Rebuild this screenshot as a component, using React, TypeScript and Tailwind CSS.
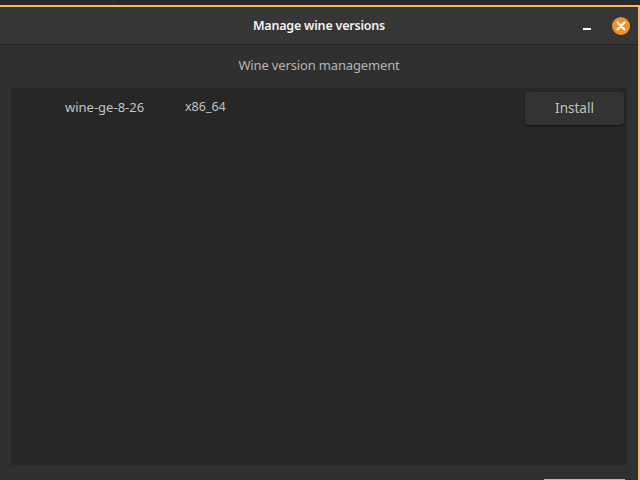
const font = { fontFamily: '"Noto Sans", sans-serif' };

const App = () => {
  return (
    <div className="w-[640px] h-[480px] overflow-hidden flex flex-col bg-[#2a2a2a]" style={font}>
      <div className="h-[5px] shrink-0 flex">
        <div className="w-[119px] border-r border-[#1c1c1c]" />
      </div>
      <div className="h-[2px] shrink-0 bg-[#fbb86c]" />
      <div className="flex-1 flex flex-col bg-[#303030] border-r-2 border-[#fbb86c] rounded-tl-sm">
        <header className="h-[38px] shrink-0 relative flex items-center justify-center bg-[#363636] border-b border-[#242424]">
          <span className="text-[12.5px] font-semibold text-[#f2f2f2] tracking-[-0.2px] mt-[2px]">Manage wine versions</span>
          <div className="absolute right-[47px] top-[21px] w-[8px] h-[2px] bg-white" />
          <div className="absolute right-[8px] top-[10px] w-[18px] h-[18px] rounded-full bg-[#f6902f] flex items-center justify-center">
            <svg width="10" height="10" viewBox="0 0 10 10">
              <path d="M1.5 1.5L8.5 8.5M8.5 1.5L1.5 8.5" stroke="#fff" strokeWidth="2.2" strokeLinecap="round" />
            </svg>
          </div>
        </header>
        <div className="h-[43px] shrink-0 flex items-center justify-center text-[13px] tracking-[-0.15px] text-[#b4b4b4] pb-[1px]">
          Wine version management
        </div>
        <div className="ml-[11px] mr-[11px] h-[377px] bg-[#272727]">
          <div className="flex items-center h-[38px]">
            <span className="ml-[54px] w-[120px] text-[13px] text-[#c2c2c2] mt-[1px]">wine-ge-8-26</span>
            <span className="text-[12.5px] text-[#c2c2c2] mt-[1px]">x86_64</span>
            <button className="ml-auto mr-[3px] mt-[2px] w-[99px] h-[33px] rounded bg-[#333333] text-[13.5px] text-[#c2c2c2] shadow-[0_1px_2px_rgba(0,0,0,0.5)]">
              Install
            </button>
          </div>
        </div>
        <div className="flex-1 flex justify-end items-end pr-[13px]">
          <div className="w-[81px] h-px bg-[#8fcfb0]" />
        </div>
      </div>
    </div>
  );
};

export default App;
